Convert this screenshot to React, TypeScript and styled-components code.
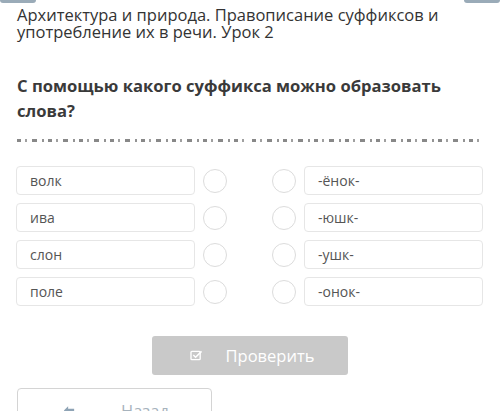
import styled, { createGlobalStyle } from "styled-components";

const GlobalStyle = createGlobalStyle`
  html, body {
    margin: 0;
    padding: 0;
    background: #fff;
  }
  body {
    font-family: "Open Sans", "Liberation Sans", sans-serif;
    overflow: hidden;
  }
`;

const pairs = [
	{ word: "волк", suffix: "-ёнок-" },
	{ word: "ива", suffix: "-юшк-" },
	{ word: "слон", suffix: "-ушк-" },
	{ word: "поле", suffix: "-онок-" },
];

const App = () => {
	return (
		<Page>
			<GlobalStyle />
			<TopBar>
				<Tab />
				<Tab />
			</TopBar>

			<Title>
				Архитектура и природа. Правописание суффиксов и
				<br />
				употребление их в речи. Урок 2
			</Title>

			<Question>С помощью какого суффикса можно образовать слова?</Question>

			<Dashes>
				<DashLine />
				<DashLine />
			</Dashes>

			<Rows>
				{pairs.map((p) => (
					<Row key={p.word}>
						<Cell>{p.word}</Cell>
						<Radio />
						<Spacer />
						<Radio />
						<Cell>{p.suffix}</Cell>
					</Row>
				))}
			</Rows>

			<CheckWrap>
				<CheckButton type="button">
					<svg width="13" height="11" viewBox="0 0 14 12" fill="none">
						<rect x="1" y="1.5" width="10" height="9" rx="1" stroke="#fff" strokeWidth="1.5" />
						<path d="M3.5 5.5 L6 8 L12.5 1.5" stroke="#fff" strokeWidth="1.6" />
					</svg>
					<span>Проверить</span>
				</CheckButton>
			</CheckWrap>

			<BackButton type="button">
				<svg width="12" height="11" viewBox="0 0 14 12">
					<path d="M6 1 L1 6 L6 11 L6 8 L13 8 L13 4 L6 4 Z" fill="#8ea3b5" />
				</svg>
				<span>Назад</span>
			</BackButton>
		</Page>
	);
};

const Page = styled.main`
    width: 500px;
    height: 411px;
    overflow: hidden;
    display: flex;
    flex-direction: column;

    & > * {
        flex-shrink: 0;
    }
`

const TopBar = styled.div`
    display: flex;
    justify-content: space-between;
    height: 3px;
`

const Tab = styled.div`
    width: 36px;
    height: 3px;
    background: #9aabb8;
    border-radius: 0 0 4px 4px;
`

const Title = styled.h1`
    margin: 3px 0 0 17px;
    font-size: 16.5px;
    font-weight: 400;
    line-height: 17px;
    color: #333;
`

const Question = styled.h2`
    margin: 33px 0 0 17px;
    width: 450px;
    font-size: 16.6px;
    font-weight: 700;
    line-height: 25px;
    color: #3a3a3a;
`

const Dashes = styled.div`
    display: flex;
    gap: 4px;
    margin: 16px 0 0 17px;
    width: 466px;
`

const DashLine = styled.div`
    flex: 1;
    height: 3px;
    background: repeating-linear-gradient(
        90deg,
        #555 0 4px,
        transparent 4px 8px,
        #777 8px 10px,
        transparent 10px 15px,
        #555 15px 20px,
        transparent 20px 25px,
        #666 25px 27px,
        transparent 27px 31px
    );
    opacity: 0.7;
`

const Rows = styled.div`
    display: flex;
    flex-direction: column;
    gap: 8px;
    margin: 24px 0 0 16px;
`

const Row = styled.div`
    display: flex;
    align-items: center;
`

const Cell = styled.div`
    box-sizing: border-box;
    width: 179px;
    height: 29px;
    border: 1px solid #e6e6e6;
    border-radius: 4px;
    padding: 0 13px;
    display: flex;
    align-items: center;
    font-size: 14px;
    color: #555;
`

const Radio = styled.div`
    box-sizing: border-box;
    width: 24px;
    height: 24px;
    margin: 0 8px;
    border: 1.5px solid #dcdcdc;
    border-radius: 50%;
`

const Spacer = styled.div`
    width: 29px;
`

const CheckWrap = styled.div`
    display: flex;
    margin: 30px 0 0 152px;
`

const CheckButton = styled.button`
    width: 196px;
    height: 39px;
    border: none;
    border-radius: 3px;
    background: #c9c9c9;
    color: #fff;
    font-family: "Open Sans", "Liberation Sans", sans-serif;
    font-size: 16.5px;
    display: flex;
    align-items: center;
    justify-content: center;
    gap: 23px;
    padding: 0 0 0 4px;
`

const BackButton = styled.button`
    margin: 13px 0 0 17px;
    width: 195px;
    height: 44px;
    background: #fff;
    border: 1px solid #d4d4d4;
    border-radius: 4px;
    font-family: "Open Sans", "Liberation Sans", sans-serif;
    font-size: 16.5px;
    color: #a7b3bd;
    display: flex;
    align-items: center;
    padding: 0 0 0 45px;
    gap: 46px;
`

export default App;
